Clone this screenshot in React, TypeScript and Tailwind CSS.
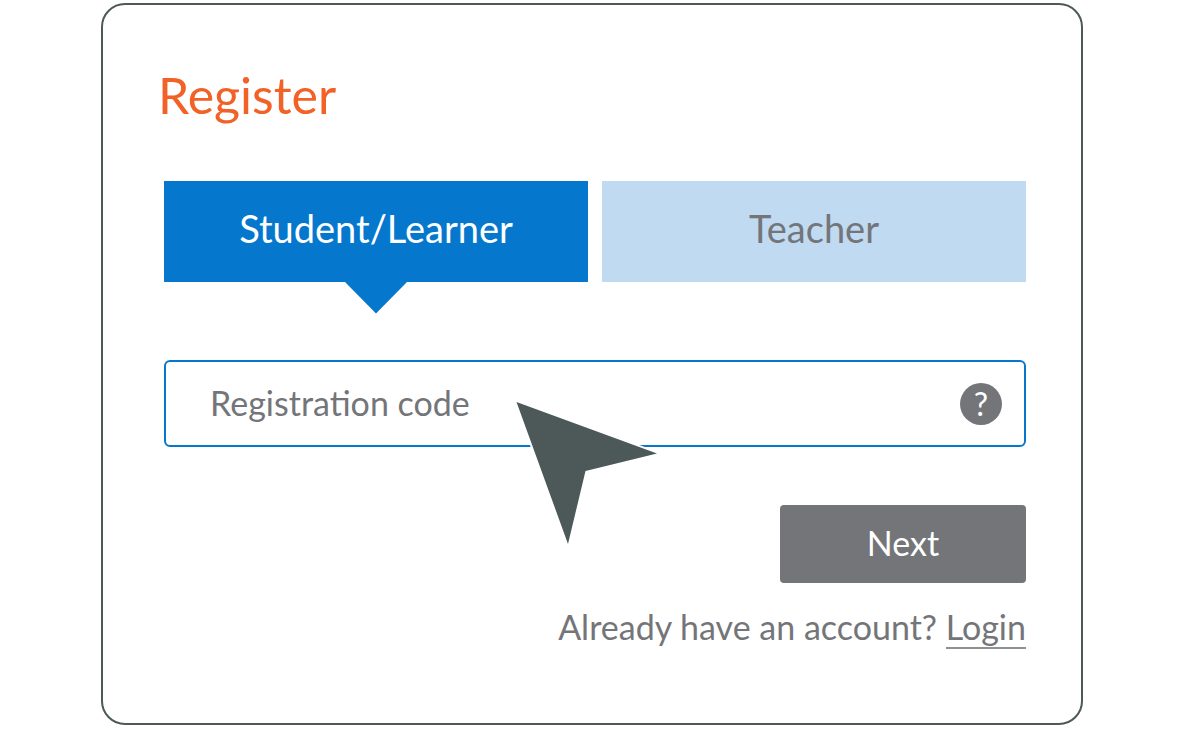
import React, { useState } from 'react';

type Role = 'student' | 'teacher';

const roles: { id: Role; label: string }[] = [
  { id: 'student', label: 'Student/Learner' },
  { id: 'teacher', label: 'Teacher' },
];

function RoleButton({ label, active, onClick }: { label: string; active: boolean; onClick: () => void }) {
  return (
    <button
      type="button"
      aria-pressed={active}
      onClick={onClick}
      className={
        active
          ? 'relative h-[101px] bg-[#0578cd] pb-2 text-[38px] leading-[48px] text-white'
          : 'relative h-[101px] bg-[#c0daf1] pb-2 text-[38px] leading-[48px] text-[#747579]'
      }
    >
      {label}
      {active && (
        <svg
          viewBox="0 0 62 32"
          className="absolute top-full left-1/2 h-8 w-[62px] -translate-x-1/2 fill-[#0578cd]"
          aria-hidden="true"
        >
          <path d="M0 0H62L31 31.5Z" />
        </svg>
      )}
    </button>
  );
}

function Pointer() {
  return (
    <svg
      viewBox="0 0 150 150"
      className="pointer-events-none absolute top-[38px] left-[348px] size-[150px]"
      aria-hidden="true"
    >
      <path d="M2.5 2L143 53.5L71.5 71L54 144Z" fill="#fff" stroke="#fff" strokeWidth="4" />
      <path d="M2.5 2L143 53.5L71.5 71L54 144Z" fill="#4d5958" />
    </svg>
  );
}

function App() {
  const [role, setRole] = useState<Role>('student');
  const [code, setCode] = useState('');

  return (
    <div className="flex min-h-screen items-start justify-center bg-white py-[3px] font-[Lato,sans-serif]">
      <main className="w-full max-w-[982px] rounded-3xl border-2 border-[#4d5958] px-[55px] pt-[60px] pb-[74px]">
        <h1 className="text-[50px] leading-[60px] text-[#f26126]">Register</h1>

        <form className="mt-14 pl-1.5 text-[34px] leading-[44px]" onSubmit={(e) => e.preventDefault()}>
          <div className="grid grid-cols-2 gap-[14px]">
            {roles.map((r) => (
              <RoleButton key={r.id} label={r.label} active={role === r.id} onClick={() => setRole(r.id)} />
            ))}
          </div>

          <div className="relative mt-[78px] flex h-[87px] items-center rounded-md border-2 border-[#0578cd] pr-[22px]">
            <input
              type="text"
              aria-label="Registration code"
              placeholder="Registration code"
              value={code}
              onChange={(e) => setCode(e.target.value)}
              className="h-full min-w-0 flex-1 bg-transparent pb-0.5 pl-11 text-[#747579] outline-none placeholder:text-[#747579] placeholder:opacity-100"
            />
            <button
              type="button"
              aria-label="Help"
              className="flex size-[42px] items-center justify-center rounded-full bg-[#747579] text-[32px] leading-[42px] text-white"
            >
              ?
            </button>
            <Pointer />
          </div>

          <div className="mt-[58px] flex justify-end">
            <button type="submit" className="h-[78px] w-[246px] rounded-sm bg-[#747579] pb-0.5 text-white">
              Next
            </button>
          </div>

          <p className="mt-[22px] text-right text-[#747579]">
            Already have an account?{' '}
            <a href="#login" className="border-b-2 border-[#8f9093]">
              Login
            </a>
          </p>
        </form>
      </main>
    </div>
  );
}

export default App;
